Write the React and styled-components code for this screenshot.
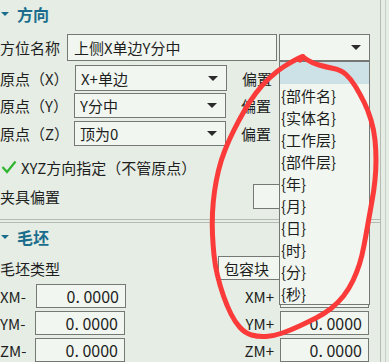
import React from 'react';
import styled, { createGlobalStyle } from 'styled-components';

const Global = createGlobalStyle`
  html, body { margin: 0; padding: 0; }
  body {
    background: #e5ede4;
    font-family: "Noto Sans CJK SC", "Noto Sans", sans-serif;
    overflow: hidden;
  }
  * { box-sizing: border-box; }
`;

const Page = styled.div`
  position: relative;
  width: 389px;
  height: 362px;
  overflow: hidden;
  background: #e5ede4;
  display: flex;
  color: #1e1e1e;
  font-size: 15px;
`;

const Panel = styled.div`
  width: 381px;
  border-right: 1px solid #b3bbb3;
  display: flex;
  flex-direction: column;
`;

const Edge = styled.div`
  width: 5px;
  border-right: 1px solid #c9d0c9;
`;

const Group = styled.div`
  display: flex;
  flex-direction: column;
  height: ${p => p.$h}px;
  margin-top: ${p => p.$mt || 0}px;
  border-top: ${p => (p.$top ? '1px solid #b3bbb3' : 'none')};
  border-bottom: ${p => (p.$bottom ? '1px solid #b3bbb3' : 'none')};
`;

const Header = styled.div`
  display: flex;
  align-items: center;
  height: ${p => p.$h}px;
  color: #1a6d8c;
  font-weight: 700;
  font-size: 16px;
  gap: 8px;
`;

const Tri = styled.span`
  display: inline-block;
  margin-left: 1px;
  width: 0;
  height: 0;
  border-left: 4px solid transparent;
  border-right: 4px solid transparent;
  border-top: 4px solid #1a6d8c;
`;

const Row = styled.div`
  display: flex;
  align-items: center;
  height: ${p => p.$h || 25}px;
  margin-top: ${p => p.$mt || 0}px;
`;

const Label = styled.div`
  width: ${p => p.$w}px;
  flex: none;
  white-space: nowrap;
  line-height: 1;
  margin-left: ${p => p.$ml || 0}px;
  text-align: ${p => p.$align || 'left'};
  padding-right: ${p => p.$pr || 0}px;
`;

const Field = styled.div`
  flex: none;
  width: ${p => p.$w}px;
  height: 100%;
  margin-left: ${p => p.$ml || 0}px;
  background: #f1f7f0;
  border: 1px solid #767876;
  display: flex;
  align-items: center;
  justify-content: ${p => (p.$right ? 'flex-end' : 'space-between')};
  padding: 0 ${p => (p.$right ? 6 : 8)}px 0 ${p => p.$pl || 5}px;
  font-size: ${p => p.$fs || 15}px;
  white-space: nowrap;
  line-height: 1;
`;

const Arrow = styled.span`
  width: 0;
  height: 0;
  border-left: 5px solid transparent;
  border-right: 5px solid transparent;
  border-top: 5px solid #2b2b2b;
`;

const Check = styled.svg`
  width: 16px;
  height: 14px;
  margin: 0 4px 0 1px;
  flex: none;
`;

const List = styled.div`
  position: absolute;
  left: 279px;
  top: 61px;
  width: 91px;
  height: 244px;
  background: #f1f7f0;
  border: 1px solid #767876;
  display: flex;
  flex-direction: column;
`;

const Item = styled.div`
  height: 22px;
  flex: none;
  display: flex;
  align-items: center;
  padding-left: 1px;
  font-size: 15px;
  line-height: 1;
  color: #1e1e1e;
  background: ${p => (p.$sel ? '#cde2e6' : 'transparent')};
`;

const Overlay = styled.svg`
  position: absolute;
  left: 0;
  top: 0;
  width: 389px;
  height: 362px;
  pointer-events: none;
`;

const items = ['', '{部件名}', '{实体名}', '{工作层}', '{部件层}', '{年}', '{月}', '{日}', '{时}', '{分}', '{秒}'];

const pts = [
  [303, 57], [312, 63], [326, 67], [341, 70], [351, 79], [360, 94], [368, 110], [374, 130],
  [376, 150], [376, 170], [374, 190], [370, 212], [366, 235], [362, 256], [357, 272],
  [349, 289], [338, 303], [324, 314], [308, 322], [291, 330], [274, 336], [258, 337],
  [245, 333], [235, 322], [227, 306], [220, 286], [215, 265], [213, 245], [212, 224],
  [213, 202], [216, 181], [221, 160], [229, 140], [239, 120], [250, 101], [262, 85],
  [277, 71], [291, 62], [305, 55], [300, 60]
];

function smoothPath(p) {
  let d = `M${p[0][0]},${p[0][1]}`;
  for (let i = 1; i < p.length; i++) {
    const [x0, y0] = p[i - 1];
    const [x1, y1] = p[i];
    d += ` Q${x0},${y0} ${(x0 + x1) / 2},${(y0 + y1) / 2}`;
  }
  const last = p[p.length - 1];
  d += ` L${last[0]},${last[1]}`;
  return d;
}

export default function App() {
  return (
    <>
      <Global />
      <Page>
        <Panel>
          <Group $h={220} $bottom>
            <Header $h={28}><Tri />方向</Header>
            <Row $h={27} $mt={6}>
              <Label $w={67}>方位名称</Label>
              <Field $w={210} $pl={6}>上侧X单边Y分中</Field>
              <Field $w={91} $ml={2}><span /><Arrow /></Field>
            </Row>
            <Row $h={26} $mt={4}>
              <Label $w={75}>原点（X）</Label>
              <Field $w={152}>X+单边<Arrow /></Field>
              <Label $w={40} $ml={15}>偏置</Label>
            </Row>
            <Row $h={25} $mt={2}>
              <Label $w={74}>原点（Y）</Label>
              <Field $w={152}>Y分中<Arrow /></Field>
              <Label $w={40} $ml={15}>偏置</Label>
            </Row>
            <Row $h={25} $mt={3}>
              <Label $w={74}>原点（Z）</Label>
              <Field $w={152}>顶为0<Arrow /></Field>
              <Label $w={40} $ml={15}>偏置</Label>
            </Row>
            <Row $h={24} $mt={9}>
              <Check viewBox="0 0 16 14">
                <polyline points="1.5,7 6,12 14.5,1.5" fill="none" stroke="#2fb52f" strokeWidth="2.2" />
              </Check>
              <Label $w={200}>XYZ方向指定（不管原点）</Label>
            </Row>
            <Row $h={25} $mt={5}>
              <Label $w={253}>夹具偏置</Label>
              <Field $w={40} />
            </Row>
          </Group>
          <Group $h={140} $mt={2} $top>
            <Header $h={29}><Tri />毛坯</Header>
            <Row $h={26} $mt={5}>
              <Label $w={218}>毛坯类型</Label>
              <Field $w={151}>包容块<span /></Field>
            </Row>
            <Row $h={25} $mt={4}>
              <Label $w={36}>XM-</Label>
              <Field $w={90} $right $fs={16}>0. 0000</Field>
              <Label $w={154} $align="right" $pr={6}>XM+</Label>
              <Field $w={89} $right $fs={16}>0. 0000</Field>
            </Row>
            <Row $h={25} $mt={3}>
              <Label $w={35}>YM-</Label>
              <Field $w={90} $right $fs={16}>0. 0000</Field>
              <Label $w={155} $align="right" $pr={6}>YM+</Label>
              <Field $w={89} $right $fs={16}>0. 0000</Field>
            </Row>
            <Row $h={25} $mt={3}>
              <Label $w={35}>ZM-</Label>
              <Field $w={90} $right $fs={16}>0. 0000</Field>
              <Label $w={155} $align="right" $pr={6}>ZM+</Label>
              <Field $w={89} $right $fs={16}>0. 0000</Field>
            </Row>
          </Group>
        </Panel>
        <Edge />
        <List>
          {items.map((t, i) => (
            <Item key={i} $sel={i === 0}>{t}</Item>
          ))}
        </List>
        <Overlay viewBox="0 0 389 362">
          <path d={smoothPath(pts)} fill="none" stroke="#fb3a3a" strokeWidth="5" strokeLinecap="round" strokeLinejoin="round" />
        </Overlay>
      </Page>
    </>
  );
}
